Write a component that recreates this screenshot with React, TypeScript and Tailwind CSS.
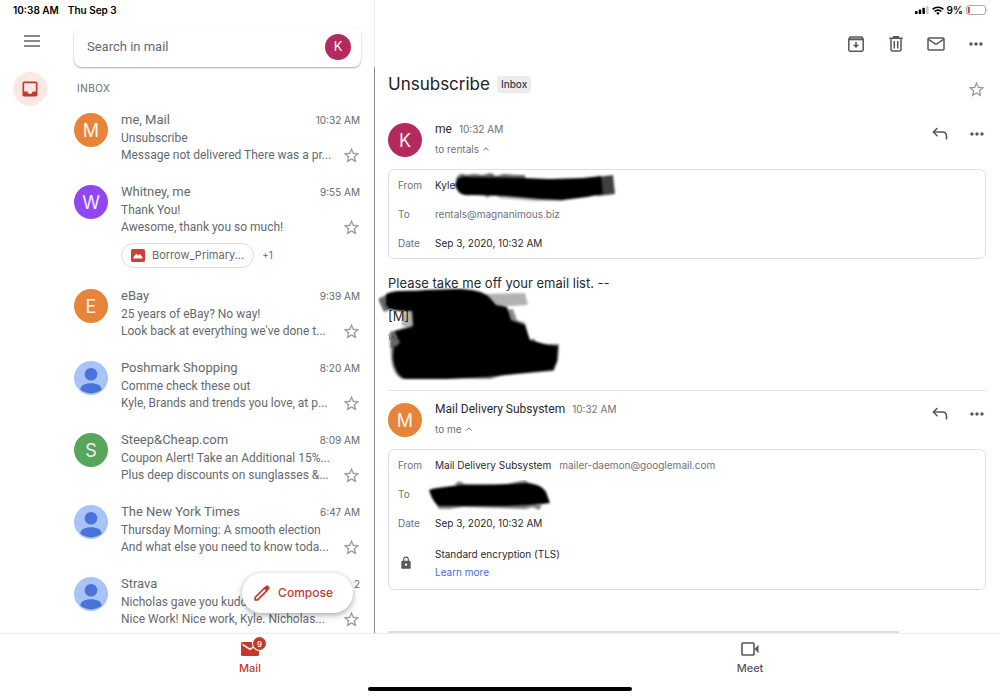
import React from "react";
import { MdInbox, MdLock, MdMoreHoriz, MdStarBorder } from "react-icons/md";

/* ───────────────────────────────────────────────
   Data
────────────────────────────────────────────────── */
type Mail = {
    from: string;
    time: string;
    subject: string;
    snippet: string;
    letter?: string;
    color?: string;
    attachment?: string;
};

const mails: Mail[] = [
    {
        from: "me, Mail",
        time: "10:32 AM",
        subject: "Unsubscribe",
        snippet: "Message not delivered There was a pr...",
        letter: "M",
        color: "bg-[#e8833a]",
    },
    {
        from: "Whitney, me",
        time: "9:55 AM",
        subject: "Thank You!",
        snippet: "Awesome, thank you so much!",
        letter: "W",
        color: "bg-[#9147f0]",
        attachment: "Borrow_Primary...",
    },
    {
        from: "eBay",
        time: "9:39 AM",
        subject: "25 years of eBay? No way!",
        snippet: "Look back at everything we've done t...",
        letter: "E",
        color: "bg-[#e8833a]",
    },
    {
        from: "Poshmark Shopping",
        time: "8:20 AM",
        subject: "Comme check these out",
        snippet: "Kyle, Brands and trends you love, at p...",
    },
    {
        from: "Steep&Cheap.com",
        time: "8:09 AM",
        subject: "Coupon Alert! Take an Additional 15%...",
        snippet: "Plus deep discounts on sunglasses &...",
        letter: "S",
        color: "bg-[#57a65b]",
    },
    {
        from: "The New York Times",
        time: "6:47 AM",
        subject: "Thursday Morning: A smooth election",
        snippet: "And what else you need to know toda...",
    },
    {
        from: "Strava",
        time: "Sep 2",
        subject: "Nicholas gave you kudos",
        snippet: "Nice Work! Nice work, Kyle. Nicholas...",
    },
];

/* ───────────────────────────────────────────────
   Icons
────────────────────────────────────────────────── */
const ArchiveIcon = () => (
    <svg width="16" height="16" viewBox="0 0 16 16" fill="none" stroke="currentColor" strokeWidth="1.5">
        <path d="M2.2 1h11.6l1.4 2v10.8a1.4 1.4 0 0 1-1.4 1.4H2.2a1.4 1.4 0 0 1-1.4-1.4V3z" />
        <path d="M1 3.3h14" strokeWidth="2" />
        <path d="M8 6v4.500" />
        <path d="M4.800 8.800h6.400L8 12z" fill="currentColor" stroke="none" />
    </svg>
);

const TrashIcon = () => (
    <svg width="14" height="16" viewBox="0 0 14 16" fill="none" stroke="currentColor" strokeWidth="1.5">
        <path d="M.4 2.200h13.200M4.500 1.700V.8h5v.9" />
        <path d="M2 2.500v11.300c0 .8.5 1.300 1.300 1.300h7.400c.8 0 1.300-.5 1.300-1.300V2.500" />
        <path d="M5.300 5v7.500M8.700 5v7.500" />
    </svg>
);

const EnvelopeIcon = () => (
    <svg width="18" height="14" viewBox="0 0 18 14" fill="none" stroke="currentColor" strokeWidth="1.5">
        <rect x="1" y="1" width="16" height="12" rx="1" />
        <path d="m1.500 2.300 7.500 5 7.500-5" />
    </svg>
);

const ReplyIcon = () => (
    <svg width="16" height="14" viewBox="0 0 16 14" fill="none" stroke="currentColor" strokeWidth="1.5">
        <path d="M5.500 1 1.300 5.100l4.200 4.200" />
        <path d="M1.500 5.100h8.700c2.600 0 4.300 1.600 4.300 4.200v3.200" />
    </svg>
);

const PencilIcon = () => (
    <svg width="16" height="16" viewBox="0 0 16 16" className="shrink-0">
        <path
            d="M1.200 14.800v-2.400L10.600 3l2.400 2.400-9.400 9.400z"
            fill="none"
            stroke="currentColor"
            strokeWidth="1.700"
        />
        <path d="m9.600 3.300 2.500-2.500a1.400 1.400 0 0 1 2 0l1.100 1.100a1.400 1.400 0 0 1 0 2l-2.500 2.500z" fill="currentColor" />
    </svg>
);

const ChevronUp = () => (
    <svg width="6" height="4" viewBox="0 0 6 4" fill="none" stroke="currentColor">
        <path d="M.4 3.500 3 .8l2.600 2.700" />
    </svg>
);

const StatusIcons = () => (
    <>
        <svg width="14" height="8" viewBox="0 0 14 8">
            <rect x="0" y="5" width="2.500" height="3" rx=".6" />
            <rect x="3.700" y="3.500" width="2.500" height="4.500" rx=".6" />
            <rect x="7.400" y="1.800" width="2.500" height="6.200" rx=".6" />
            <rect x="11.100" y="0" width="2.500" height="8" rx=".6" fill="#c8c8c8" />
        </svg>
        <svg width="12" height="9" viewBox="0 0 12 9" fill="none" stroke="#000" strokeWidth="1.600">
            <path d="M.6 3.400a7.700 7.700 0 0 1 10.800 0" />
            <path d="M2.600 5.500a4.800 4.800 0 0 1 6.800 0" />
            <path d="M4.200 7 6 8.900 7.800 7a2.600 2.600 0 0 0-3.600 0z" fill="#000" stroke="none" />
        </svg>
    </>
);

const BatteryIcon = () => (
    <svg width="22" height="10" viewBox="0 0 22 10">
        <rect x=".5" y=".5" width="19" height="9" rx="2.500" fill="none" stroke="#a9a9a9" />
        <rect x="1.800" y="1.800" width="2" height="6.400" rx=".8" fill="#f0372f" />
        <path d="M20.600 3.400c1.200.4 1.200 2.800 0 3.200z" fill="#a9a9a9" />
    </svg>
);

/* ───────────────────────────────────────────────
   Marker strokes covering private details
────────────────────────────────────────────────── */
const ScribbleFrom = () => (
    <svg width="166" height="34" viewBox="0 0 166 34" className="absolute top-0 left-[18px]" aria-hidden="true">
        <g className="blur-[1px]">
            <path d="M3 8C5 3 9 2 13 4l8-1 9 1 8-2 5 3 8-2 12 1 9 0v6H3z" opacity=".6" />
            <path d="M44 23l68 2-2 5-28 0-36-3z" opacity=".3" />
            <path d="M28 22l6 5 6-4z" opacity=".4" />
            <path d="m144 6 16-2 2 19-18 2z" opacity=".75" />
            <path d="M2 14C4 6 9 5 16 6l56 1 24 1 34-1 18-2 2 18-16 3-24 3-24-1-34-3-34-1c-10 1-13-2-16-10z" />
        </g>
    </svg>
);

const ScribbleTo = () => (
    <svg width="126" height="34" viewBox="0 0 126 34" className="absolute top-0 -left-[7px]" aria-hidden="true">
        <g className="blur-[1px]">
            <path d="M26 5l5-4 6 3 42 0 18-4 5 4 12 3z" opacity=".5" />
            <path d="M7 21l4 8 10 0 14-2 62 2 8-2 6 3 3-5z" opacity=".5" />
            <path d="M1 10c8-3 18-3 30-5l34 0 35-2c9 1 15 4 18 9l4 11-8 1-14 1-20 1-40 0-30 0c-5-5-7-10-9-16z" />
        </g>
    </svg>
);

const ScribbleBody = () => (
    <svg width="186" height="98" viewBox="0 0 186 98" className="absolute -top-1 -left-[10px]" aria-hidden="true">
        <g className="blur-[1px]">
            <path d="m106 6 41-1 3 12-36 2z" opacity=".3" />
            <path d="M0 11 10 6l6 14-10 4z" opacity=".6" />
            <path d="m127 22 8-1 4 11 8 3 4 18 5-3 4 8-30 2z" opacity=".45" />
            <path d="m24 26 12-4 4 18-16-2z" opacity=".3" />
            <path d="M12 44l28-8v24l-28 0z" opacity=".6" />
            <path d="M13 60l20-8 100 4 48 0-1 16-4 11-50 4-14 4-50-1-38 1c-9-4-12-18-11-31z" opacity=".5" />
            <path d="M8 6C18 1 32 4 47 2l30-1c16 0 29 2 35 9l6 7 11 2 4 13 14 5 5 15 18 5 10 1-1 15-4 9-66 7-40 2-42 0c-10-4-14-20-11-31 5-4 8-6 4-9l-3-8 18-4-1-16C20 24 8 22 8 16z" />
        </g>
        <path d="m11 46 1 6 3-4 2 4" fill="none" stroke="#27457f" opacity=".6" />
    </svg>
);

/* ───────────────────────────────────────────────
   Small parts
────────────────────────────────────────────────── */
function Avatar({ letter, color }: { letter?: string; color?: string }) {
    if (!letter) {
        return (
            <svg width="34" height="34" viewBox="0 0 34 34" className="shrink-0">
                <circle cx="17" cy="17" r="17" fill="#a8c3f8" />
                <circle cx="17" cy="13.300" r="6.300" fill="#4a73d9" />
                <path d="M6.300 28.600c0-4.200 4.800-6.400 10.700-6.400s10.700 2.200 10.700 6.400a16.900 16.900 0 0 1-21.400 0z" fill="#4a73d9" />
            </svg>
        );
    }
    return (
        <span
            className={`flex size-[34px] shrink-0 items-center justify-center rounded-full text-[18px] text-white/90 ${color}`}
        >
            {letter}
        </span>
    );
}

function MailRow({ mail }: { mail: Mail }) {
    return (
        <li className="flex gap-[13px] pt-2 pr-[14px] pb-[10px] text-[#66696d]">
            <div className="pt-[3px]">
                <Avatar letter={mail.letter} color={mail.color} />
            </div>
            <div className="min-w-0 flex-1">
                <div className="flex justify-between leading-5">
                    <span className="font-['Roboto','Inter',sans-serif] text-[13px] whitespace-nowrap">{mail.from}</span>
                    <span className="text-[10px]">{mail.time}</span>
                </div>
                <div className="font-['Roboto','Inter',sans-serif] text-[12px] leading-[17px] whitespace-nowrap">
                    {mail.subject}
                </div>
                <div className="flex h-[17px] items-center justify-between">
                    <span className="font-['Roboto','Inter',sans-serif] text-[12px] leading-[17px] whitespace-nowrap">
                        {mail.snippet}
                    </span>
                    <button aria-label={`Star ${mail.from}`} className="-mr-px text-[#96999e]">
                        <MdStarBorder size={19} />
                    </button>
                </div>
                {mail.attachment && (
                    <div className="mt-[7px] flex items-center gap-2">
                        <button className="flex h-[25px] items-center gap-[7px] rounded-full border border-[#dcdde0] px-[9px] text-[11px]">
                            <svg width="14" height="13" viewBox="0 0 14 13">
                                <rect width="14" height="13" rx="1.500" fill="#cc4136" />
                                <path d="M2.500 9.500V8.200l2.700-3.700 2.200 2 1.600-1.500 2.500 3.300v1.200z" fill="#fff" />
                            </svg>
                            {mail.attachment}
                        </button>
                        <span className="text-[10px]">+1</span>
                    </div>
                )}
            </div>
        </li>
    );
}

function MessageHeader(props: { letter: string; color: string; name: string; to: string }) {
    return (
        <div className="flex gap-[13px]">
            <Avatar letter={props.letter} color={props.color} />
            <div className="flex-1">
                <div className="flex items-center gap-[7px] leading-3">
                    <span className="font-['Roboto','Inter',sans-serif] text-[12px] text-[#28292c]">{props.name}</span>
                    <span className="text-[10px] text-[#6e7175]">10:32 AM</span>
                </div>
                <button className="mt-2 flex items-center gap-1 text-[10px] leading-3 text-[#6e7175]">
                    {props.to} <ChevronUp />
                </button>
            </div>
            <div className="flex h-[22px] items-center gap-[19px] text-[#55585d]">
                <button aria-label="Reply">
                    <ReplyIcon />
                </button>
                <button aria-label="More message options" className="-mr-px">
                    <MdMoreHoriz size={20} />
                </button>
            </div>
        </div>
    );
}

function DetailRow({ label, children }: { label: string; children: React.ReactNode }) {
    return (
        <div className="flex h-[29px] items-center">
            <dt className="w-[37px] shrink-0 text-[#6e7175]">{label}</dt>
            <dd className="relative flex h-full items-center gap-2 text-[#28292c]">{children}</dd>
        </div>
    );
}

/* ───────────────────────────────────────────────
   Page
────────────────────────────────────────────────── */
export default function App() {
    return (
        <div className="flex h-screen flex-col overflow-hidden bg-white font-['Inter','Liberation_Sans',sans-serif]">
            {/* Status bar */}
            <header className="flex h-5 shrink-0 text-[10px] font-semibold text-black">
                <div className="flex w-[37.5%] items-center gap-[9px] border-r border-[#ececec] pl-[13px]">
                    <span>10:38 AM</span>
                    <span>Thu Sep 3</span>
                </div>
                <div className="flex flex-1 items-center justify-end gap-[3px] pr-3">
                    <StatusIcons />
                    <span>9%</span>
                    <BatteryIcon />
                </div>
            </header>

            <div className="flex min-h-0 flex-1">
                {/* Inbox */}
                <section className="relative flex w-[37.5%] shrink-0 flex-col overflow-hidden">
                    <div className="flex border-r border-[#ececec] pt-[7px]">
                        <div className="w-[74px] shrink-0 pt-[2px] pl-6">
                            <button aria-label="Menu" className="text-[#5f6368]">
                                <svg width="16" height="12" viewBox="0 0 16 12" stroke="currentColor" strokeWidth="1.500">
                                    <path d="M0 1h16M0 6h16M0 11h16" />
                                </svg>
                            </button>
                        </div>
                        <div className="mr-[13px] flex h-10 min-w-0 flex-1 items-center rounded-lg pr-[10px] pl-[13px] shadow-[0_1px_2px_rgba(0,0,0,0.35)]">
                            <input
                                type="search"
                                aria-label="Search in mail"
                                placeholder="Search in mail"
                                className="min-w-0 flex-1 font-['Roboto','Inter',sans-serif] text-[13px] outline-none placeholder:text-[#66696d]"
                            />
                            <button
                                aria-label="Account"
                                className="flex size-[26px] items-center justify-center rounded-full bg-[#b52a5c] text-[13px] text-white"
                            >
                                K
                            </button>
                        </div>
                    </div>

                    <div className="flex min-h-0 flex-1 overflow-hidden border-r border-[#8e8e90]">
                        <nav className="w-[74px] shrink-0 pt-[5px] pl-[13px]">
                            <button
                                aria-label="Inbox"
                                className="flex size-[34px] items-center justify-center rounded-full bg-[#fbe7e4] text-[#c5392c]"
                            >
                                <MdInbox size={20} />
                            </button>
                        </nav>
                        <div className="min-w-0 flex-1">
                            <h2 className="h-[35px] pt-[15px] pl-[3px] text-[10px] leading-3 tracking-wider text-[#66696d]">
                                INBOX
                            </h2>
                            <ul>
                                {mails.map((m) => (
                                    <MailRow key={m.from} mail={m} />
                                ))}
                            </ul>
                        </div>
                    </div>

                    <button className="absolute right-[22px] bottom-5 flex h-10 items-center gap-2 rounded-full bg-white pr-5 pl-3 text-[12px] font-medium text-[#c5392c] shadow-[0_2px_6px_rgba(0,0,0,0.35)]">
                        <PencilIcon />
                        Compose
                    </button>
                </section>

                {/* Conversation */}
                <main className="min-w-0 flex-1 overflow-hidden pr-[14px] pl-[13px]">
                    <div className="flex h-12 items-center justify-end text-[#55585d]">
                        <button aria-label="Archive" className="flex w-10 justify-center">
                            <ArchiveIcon />
                        </button>
                        <button aria-label="Delete" className="flex w-10 justify-center">
                            <TrashIcon />
                        </button>
                        <button aria-label="Mark as unread" className="flex w-10 justify-center">
                            <EnvelopeIcon />
                        </button>
                        <button aria-label="More" className="-mr-[10px] flex w-10 justify-center">
                            <MdMoreHoriz size={20} />
                        </button>
                    </div>

                    <div className="flex h-[55px] items-start justify-between">
                        <div className="flex items-center gap-[7px] pt-1">
                            <h1 className="text-[17px] leading-6 text-[#202124]">Unsubscribe</h1>
                            <span className="rounded-[3px] bg-[#ececed] px-1 text-[10px] leading-[17px] font-medium text-[#3c4043]">
                                Inbox
                            </span>
                        </div>
                        <button aria-label="Star conversation" className="pt-3 text-[#96999e]">
                            <MdStarBorder size={19} />
                        </button>
                    </div>

                    <article className="h-[267px]">
                        <MessageHeader letter="K" color="bg-[#b52a5c]" name="me" to="to rentals" />
                        <dl className="mt-3 rounded-md border border-[#dedfe1] px-[9px] pt-px text-[10px]">
                            <DetailRow label="From">
                                Kyle
                                <ScribbleFrom />
                            </DetailRow>
                            <DetailRow label="To">
                                <span className="text-[#6e7175]">rentals@magnanimous.biz</span>
                            </DetailRow>
                            <DetailRow label="Date">Sep 3, 2020, 10:32 AM</DetailRow>
                        </dl>
                        <p className="mt-4 text-[13px] leading-[17px] text-[#28292c]">
                            Please take me off your email list. --
                        </p>
                        <div className="relative pt-4 text-[13px] leading-[17px] text-[#28292c]">
                            <p>[M]</p>
                            <ScribbleBody />
                        </div>
                    </article>

                    <article className="border-t border-[#e4e5e6] pt-3">
                        <MessageHeader
                            letter="M"
                            color="bg-[#e8833a]"
                            name="Mail Delivery Subsystem"
                            to="to me"
                        />
                        <dl className="mt-3 rounded-md border border-[#dedfe1] px-[9px] pt-px pb-2 text-[10px]">
                            <DetailRow label="From">
                                Mail Delivery Subsystem
                                <span className="text-[#6e7175]">mailer-daemon@googlemail.com</span>
                            </DetailRow>
                            <DetailRow label="To">
                                <ScribbleTo />
                            </DetailRow>
                            <DetailRow label="Date">Sep 3, 2020, 10:32 AM</DetailRow>
                            <div className="flex items-center pt-[7px] leading-[18px] text-[#28292c]">
                                <dt aria-label="Security" className="w-[37px] pl-px text-[#55585d]">
                                    <MdLock size={14} />
                                </dt>
                                <dd>
                                    Standard encryption (TLS)
                                    <br />
                                    <a href="#tls" className="text-[#3f6fd8]">
                                        Learn more
                                    </a>
                                </dd>
                            </div>
                        </dl>
                    </article>
                    <div className="mt-[41px] mr-[87px] h-10 border-t-2 border-[#dedfe1]" />
                </main>
            </div>

            {/* Bottom tabs */}
            <footer className="shrink-0 border-t border-[#ececec] pb-[7px]">
                <nav className="flex h-[53px] text-[11px] font-medium">
                    <a href="#mail" className="flex flex-1 flex-col items-center gap-1 pt-1 text-[#c5392c]">
                        <span className="flex h-[18px] items-end">
                            <span className="relative">
                                <svg width="18" height="14" viewBox="0 0 18 14">
                                    <rect width="18" height="14" rx="1.500" fill="currentColor" />
                                    <path d="m1.500 2.300 7.500 5 7.500-5" fill="none" stroke="#fff" strokeWidth="1.500" />
                                </svg>
                                <span className="absolute -top-[5px] -right-[7px] flex size-[13px] items-center justify-center rounded-full bg-[#c5392c] text-[8px] text-white ring-1 ring-white">
                                    9
                                </span>
                            </span>
                        </span>
                        <span className="leading-4">Mail</span>
                    </a>
                    <a href="#meet" className="flex flex-1 flex-col items-center gap-1 pt-1 text-[#55585d]">
                        <span className="flex h-[18px] items-end">
                            <svg width="18" height="14" viewBox="0 0 18 14">
                                <rect x="1" y="1" width="12" height="12" rx=".8" fill="none" stroke="currentColor" strokeWidth="1.600" />
                                <path d="M13.500 7 17.500 2.800v8.400z" fill="currentColor" />
                            </svg>
                        </span>
                        <span className="leading-4">Meet</span>
                    </a>
                </nav>
                <div className="mx-auto h-1 w-[264px] rounded-full bg-black" />
            </footer>
        </div>
    );
}
